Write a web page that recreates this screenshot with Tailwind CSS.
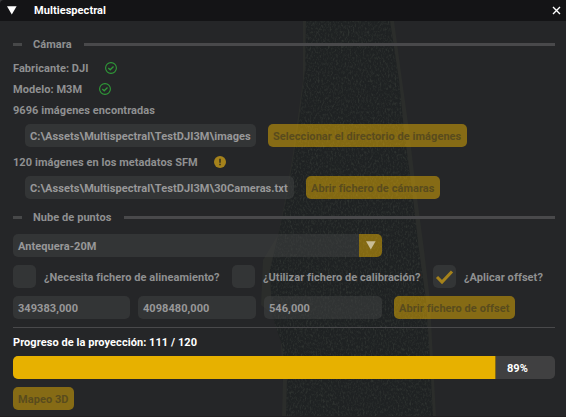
<!DOCTYPE html>
<html lang="es">
<head>
<meta charset="utf-8">
<title>Multiespectral</title>
<script src="https://cdn.jsdelivr.net/npm/@tailwindcss/browser@4"></script>
</head>
<body class="bg-[#252628] overflow-hidden">
<div class="relative isolate w-[566px] h-[417px] overflow-hidden bg-[#252628] border-b border-[#211f20] font-[Roboto,sans-serif] font-bold text-[11px] leading-[25px] text-[#8f9091] whitespace-nowrap tracking-[0.06px]">
  <!-- terrain strip behind the panel -->
  <svg class="absolute inset-0 -z-10" width="566" height="417" viewBox="0 0 566 417">
    <defs>
      <filter id="grain" x="0" y="0" width="100%" height="100%" color-interpolation-filters="sRGB">
        <feTurbulence type="fractalNoise" baseFrequency="0.6 0.35" numOctaves="3" seed="7"/>
        <feColorMatrix values="0 0 0 0 .24  0 0 0 0 .26  0 0 0 0 .24  2.4 1.4 0 0 -1.75"/>
      </filter>
      <clipPath id="strip"><path d="M306 21L305 70L299 120L293 160L286 200L277 240L270 270L272 315L282 345L287 380L286 417H433L430 360L426 300L419 250L412 190L404 130L399 80L390 21Z"/></clipPath>
    </defs>
    <path d="M303 21L303 80L297 124L292 160L285 200L278 235L263 260L261 305L280 320L281 345L283 380L282 417H436L433 360L430 300L424 250L416 190L409 130L402 80L394 21Z" fill="#2b2d2b"/>
    <g clip-path="url(#strip)">
      <rect width="566" height="417" fill="#1f2223"/>
      <rect x="255" y="21" width="190" height="396" filter="url(#grain)" opacity=".5"/>
    </g>
  </svg>

  <header class="bg-[#3a3a3c]">
    <div class="h-[21px] rounded-tl-[4px] bg-[#141416] flex items-center pl-[7px] pr-[5px] text-white leading-[21px]">
      <svg width="10" height="9" viewBox="0 0 10 9"><path d="M0 .3H9.6L4.8 8.6Z" fill="#fff"/></svg>
      <span class="ml-[17px] flex-1">Multiespectral</span>
      <svg width="9" height="9" viewBox="0 0 9 9"><path d="M1 1L8 8M8 1L1 8" stroke="#fff" stroke-width="1.4"/></svg>
    </div>
  </header>

  <main class="px-[13px]">
    <div class="flex items-center h-[23px] mt-[12px] -mr-[2px]">
      <i class="w-[9px] h-[3px] bg-[#474849]"></i><span class="ml-[11px] w-[51px]">Cámara</span><i class="flex-1 h-[3px] bg-[#49494b]"></i>
    </div>
    <div class="flex items-center h-[21px] mt-[1px]">
      <span class="w-[92px] pt-[2px]">Fabricante: DJI</span>
      <svg width="12" height="12" viewBox="0 0 12 12" fill="none" stroke="#2f9a38"><circle cx="6" cy="6" r="5.4" stroke-width="1.1"/><path d="M3.3 6.1L5.2 7.8L8.5 4.5" stroke-width="1.3"/></svg>
    </div>
    <div class="flex items-center h-[21px]">
      <span class="w-[86px] pt-[2px]">Modelo: M3M</span>
      <svg width="12" height="12" viewBox="0 0 12 12" fill="none" stroke="#2f9a38"><circle cx="6" cy="6" r="5.4" stroke-width="1.1"/><path d="M3.3 6.1L5.2 7.8L8.5 4.5" stroke-width="1.3"/></svg>
    </div>
    <div class="h-[21px] leading-[23px]">9696 imágenes encontradas</div>
    <div class="flex mt-[4px] ml-[12px] gap-[12px]">
      <div class="w-[231px] h-[23px] rounded-[5px] bg-[#424344]/50 pl-[5px] text-[#989899]">C:\Assets\Multispectral\TestDJI3M\images</div>
      <div class="w-[199px] h-[23px] rounded-[5px] bg-[#e7b001]/50 pl-[5px] text-[#594b1d]">Seleccionar el directorio de imágenes</div>
    </div>
    <div class="flex items-center h-[29px]">
      <span class="w-[201px] pt-[2px]">120 imágenes en los metadatos SFM</span>
      <svg width="12" height="12" viewBox="0 0 12 12"><circle cx="6" cy="6" r="6" fill="#a5821b"/><path d="M6 2.8V6.7M6 7.8V9.3" stroke="#2b2a22" stroke-width="1.4"/></svg>
    </div>
    <div class="flex ml-[12px] gap-[12px]">
      <div class="w-[269px] h-[23px] rounded-[5px] bg-[#424344]/50 pl-[5px] text-[#989899]">C:\Assets\Multispectral\TestDJI3M\30Cameras.txt</div>
      <div class="w-[134px] h-[23px] rounded-[5px] bg-[#e7b001]/50 pl-[5px] text-[#594b1d]">Abrir fichero de cámaras</div>
    </div>
    <div class="flex items-center h-[23px] mt-[7px] -mr-[2px]">
      <i class="w-[9px] h-[3px] bg-[#474849]"></i><span class="ml-[11px] w-[91px]">Nube de puntos</span><i class="flex-1 h-[3px] bg-[#49494b]"></i>
    </div>
    <div class="flex mt-[5px] w-[369px] h-[23px] rounded-[5px] overflow-hidden">
      <div class="w-[346px] bg-[#424344]/50 pl-[5px] text-[#989899]">Antequera-20M</div>
      <div class="w-[23px] bg-[#e7b001]/50 flex items-center justify-center"><svg width="10" height="9" viewBox="0 0 10 9"><path d="M0 .3H9.6L4.8 8.6Z" fill="#c9bd96"/></svg></div>
    </div>
    <div class="flex mt-[8px] h-[23px]">
      <i class="w-[23px] h-[23px] rounded-[5px] bg-[#424344]/50"></i><span class="ml-[8px] w-[188px]">¿Necesita fichero de alineamiento?</span>
      <i class="w-[23px] h-[23px] rounded-[5px] bg-[#424344]/50"></i><span class="ml-[8px] w-[170px]">¿Utilizar fichero de calibración?</span>
      <i class="w-[23px] h-[23px] rounded-[5px] bg-[#424344]/50"><svg width="23" height="23" viewBox="0 0 23 23"><path d="M4 12L9 17L19 6.5" fill="none" stroke="#a5821b" stroke-width="3"/></svg></i><span class="ml-[8px]">¿Aplicar offset?</span>
    </div>
    <div class="flex mt-[8px] h-[23px] text-[#989899]">
      <div class="w-[117px] rounded-[5px] bg-[#424344]/50 pl-[5px]">349383,000</div>
      <div class="ml-[8px] w-[118px] rounded-[5px] bg-[#424344]/50 pl-[5px]">4098480,000</div>
      <div class="ml-[8px] w-[118px] rounded-[5px] bg-[#424344]/50 pl-[5px]">546,000</div>
      <div class="ml-[12px] w-[121px] rounded-[5px] bg-[#e7b001]/50 pl-[5px] text-[#594b1d]">Abrir fichero de offset</div>
    </div>
    <div class="mt-[8px] h-px w-[542px] bg-[#49494b]"></div>
    <div class="h-[28px] leading-[30px] text-white">Progreso de la proyección: 111 / 120</div>
    <div class="flex h-[23px] w-[542px] rounded-[5px] overflow-hidden bg-[#404041] text-white">
      <div class="bg-[#e7b100] border-r border-[#816815]" style="width:89.1%"></div><span class="ml-[11px]">89%</span>
    </div>
    <div class="mt-[8px] w-[61px] h-[23px] rounded-[5px] bg-[#e7b001]/50 pl-[5px] text-[#594b1d]">Mapeo 3D</div>
  </main>
</div>
</body>
</html>
